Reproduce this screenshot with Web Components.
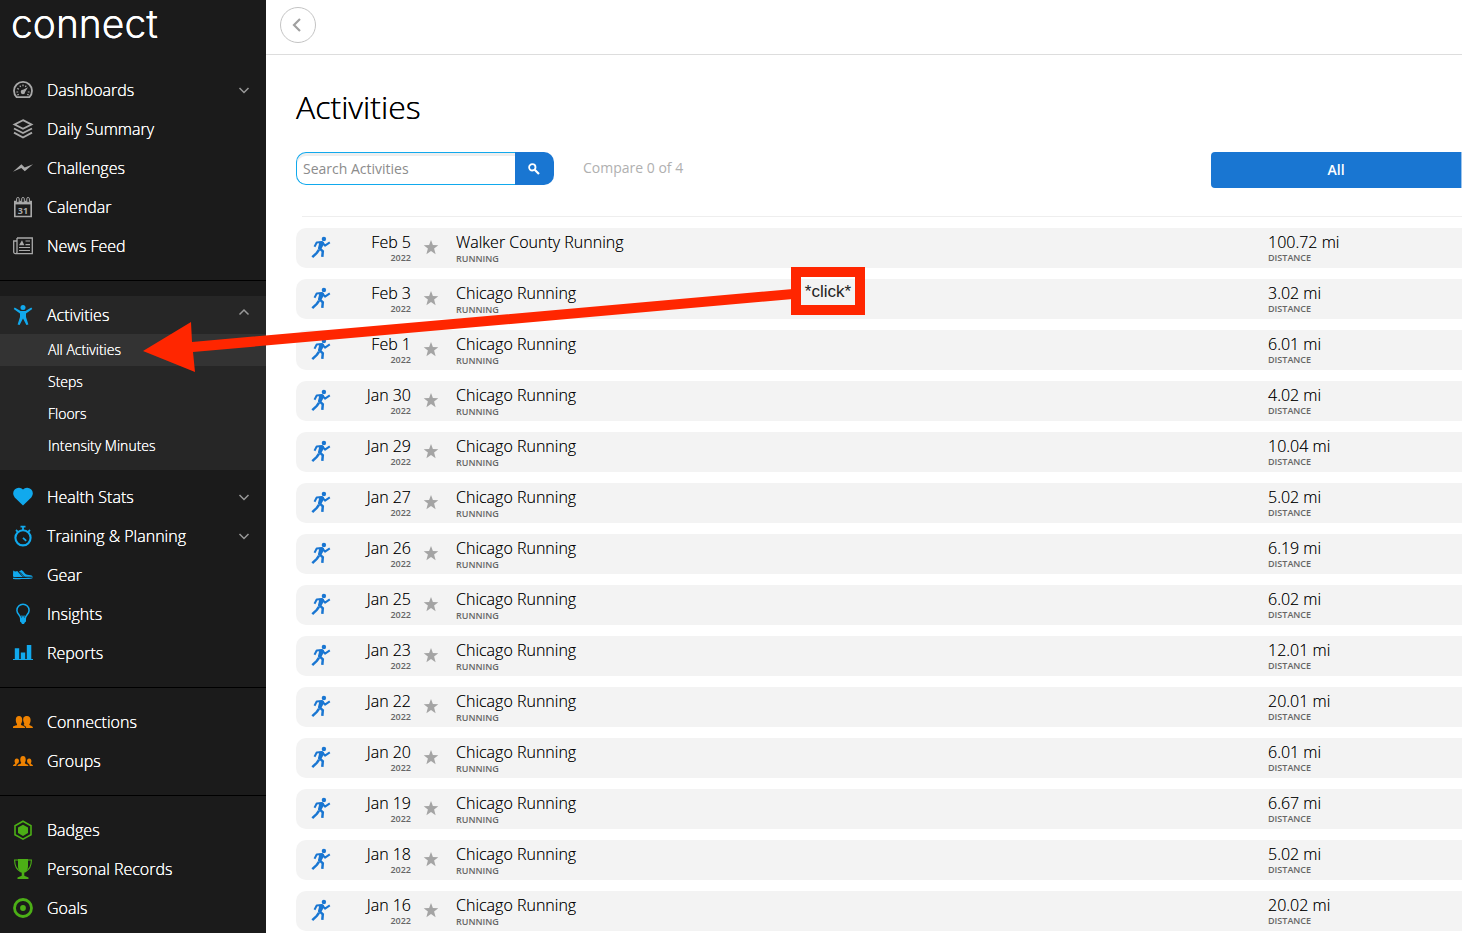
<!DOCTYPE html>
<html lang="en">
<head>
<meta charset="utf-8">
<title>Connect - Activities</title>
<style>
  body { margin: 0; font-family: "Open Sans", sans-serif; background: #fff; color: #000; }
</style>
</head>
<body>
<connect-app>
  <side-bar slot="side">
    <nav-item icon="gauge" tone="grey" chevron="down">Dashboards</nav-item>
    <nav-item icon="layers" tone="grey">Daily Summary</nav-item>
    <nav-item icon="bolt" tone="grey">Challenges</nav-item>
    <nav-item icon="calendar" tone="grey">Calendar</nav-item>
    <nav-item icon="news" tone="grey">News Feed</nav-item>
    <nav-divider></nav-divider>
    <nav-group>
      <nav-item icon="person" tone="blue" chevron="up">Activities</nav-item>
      <sub-item current>All Activities</sub-item>
      <sub-item>Steps</sub-item>
      <sub-item>Floors</sub-item>
      <sub-item>Intensity Minutes</sub-item>
    </nav-group>
    <nav-item icon="heart" tone="blue" chevron="down">Health Stats</nav-item>
    <nav-item icon="watch" tone="blue" chevron="down">Training &amp; Planning</nav-item>
    <nav-item icon="shoe" tone="blue">Gear</nav-item>
    <nav-item icon="bulb" tone="blue">Insights</nav-item>
    <nav-item icon="bars" tone="blue">Reports</nav-item>
    <nav-divider></nav-divider>
    <nav-item icon="pair" tone="orange">Connections</nav-item>
    <nav-item icon="group" tone="orange">Groups</nav-item>
    <nav-divider></nav-divider>
    <nav-item icon="badge" tone="green">Badges</nav-item>
    <nav-item icon="trophy" tone="green">Personal Records</nav-item>
    <nav-item icon="goal" tone="green">Goals</nav-item>
  </side-bar>
  <top-bar></top-bar>
  <activities-page>
    <search-box></search-box>
    <activity-table></activity-table>
  </activities-page>
  <click-hint slot="hint">*click*</click-hint>
</connect-app>

<script>
const define = (name, html, setup) => customElements.define(name, class extends HTMLElement {
  constructor() {
    super();
    const t = document.createElement('template');
    t.innerHTML = html;
    this.attachShadow({ mode: 'open' }).append(t.content.cloneNode(true));
  }
  connectedCallback() { if (setup) setup(this, this.shadowRoot); }
});

const svg = (body, box = '0 0 20 20') => `<svg viewBox="${box}" aria-hidden="true">${body}</svg>`;
const icons = {
  gauge: '<path d="M3.6 17.2A9 9 0 1 1 16.4 17.2Z" fill="none" stroke="currentColor" stroke-width="1.8" stroke-linejoin="round"/><path d="M3.4 12h1.8M14.800 12H16.600M4.300 8.400l1.600.8M6.800 5.600l.9 1.400M10 4.600v1.700M13.200 5.600l-.9 1.400M4.200 15l1.600-.6M14.200 14.400l1.600.6" stroke="currentColor" stroke-width="1.200"/><path d="M15 7.300 12.100 12a2.200 2.200 0 1 1-2-2.200Z" fill="currentColor"/>',
  layers: '<path d="M10 1.2 18.4 5.5 10 9.8 1.6 5.5ZM1 9.5l9 4.5 9-4.5M1 13.7l9 4.8 9-4.8" fill="none" stroke="currentColor" stroke-width="1.9"/>',
  bolt: '<path d="M0 13.7 8.4 6.3 11.7 9.4 20 6.2 11.8 13.2 8.3 10.1Z" fill="currentColor"/>',
  calendar: '<path d="M1.8 4.5h16.4v15H1.8Z" fill="none" stroke="currentColor" stroke-width="1.6"/><path d="M2 4h16v3.4H2Z" fill="currentColor"/><g fill="#1b1b1b" stroke="currentColor" stroke-width="1"><rect x="3.6" y=".5" width="2.6" height="5" rx="1.2"/><rect x="8.7" y=".5" width="2.6" height="5" rx="1.2"/><rect x="13.8" y=".5" width="2.6" height="5" rx="1.2"/></g><text x="10" y="17" text-anchor="middle" font-size="9" font-weight="700" fill="currentColor">31</text>',
  news: '<path d="M4 2h15.3v15.6H2.3A1.6 1.6 0 0 1 .7 16V5H4V16A1.5 1.5 0 0 1 2.3 17.6M4 2V16" fill="none" stroke="currentColor" stroke-width="1.3"/><path d="M6 9.2h5.3L10 6.4 9 4.2 7.8 6.3Z" fill="currentColor"/><path d="M12.5 5H17M12.5 8.6H17M6 11.5h11M6 14.5h11" stroke="currentColor" stroke-width="1.2"/>',
  person: '<circle cx="10" cy="2.400" r="2.500" fill="currentColor"/><path d="M.7 3.900 1.700 2.600 7.600 6h4.800L18.300 2.600 19.300 3.900 13 8.600 13 12 15.400 19.400 13.400 20 10 13.600 6.600 20 4.600 19.400 7 12V8.600Z" fill="currentColor"/>',
  heart: '<path d="M10 18.600 1.700 10.400A5.400 5.400 0 0 1 10 2.600 5.400 5.400 0 0 1 18.300 10.400Z" fill="currentColor"/>',
  watch: '<circle cx="10" cy="11.8" r="7.600" fill="none" stroke="currentColor" stroke-width="2.100"/><path d="M7.500.6h5M10 1v3M3 4l1.800 1.800M17 4l-1.800 1.800M10 11.800l3.200 3" stroke="currentColor" stroke-width="1.800"/>',
  shoe: '<path d="M.2 5.400C1.400 6.400 3 6.800 4.200 6L5 6.800 9.800 12H1.600C.5 12 0 11.500 0 10.400ZM6 6.600 8.600 5.100l1.800 1.400c1.400 2.500 3.200 3.500 5.600 3.500 1.900.1 3.600.4 3.700 1.800H9.800Z" fill="currentColor"/><path d="M0 12.700c6 .5 14 .5 20-.1-.2 1-1.700 1.500-5 1.400C9 13.700 6 14.600 0 13.900Z" fill="currentColor"/><path d="m5.400 6.700 4.900 5.300M7.200 6.900 11.600 12" stroke="#1b1b1b" stroke-width=".6"/>',
  bulb: '<path d="M7.7 14.4C7.7 11.4 3.9 9.9 3.9 6.4a6.1 6.1 0 0 1 12.2 0c0 3.500-3.800 5-3.800 8Z" fill="none" stroke="currentColor" stroke-width="1.500"/><path d="M7 14.400h6v3l-1.200 1.100-.8 1.500H9l-.8-1.500L7 17.400ZM9 14.400 8.200 11.500h1.300l.5 2 .5-2h1.300L11 14.400Z" fill="currentColor"/>',
  bars: '<path d="M0 16h1.800V5.300h4.400V16h1.600V9.600h4.400V16h1.600V2h4.500v14H20v1H0Z" fill="currentColor"/>',
  pair: '<path d="M0 16v-1.400c1.400-1.200 4.100-.8 4.100-2.400C2.600 10.400 1.600 4 6 4s3.500 6.200 1.900 8.200c0 1.600 4 1.200 4.400 3.800Z" fill="currentColor"/><path d="M14 4c4.400 0 4.300 6 2.300 8.400 0 1.700 3.700.7 3.700 3.600h-6.800c-.2-1.800-1.800-2.400-2.800-3C13 12.400 9 9.500 10.500 5.600 11 4.500 12.300 4 14 4Z" fill="currentColor"/>',
  group: '<path d="M4.500 15c.3-2 3.500-1.500 3.700-3.200C6.800 10 6.700 5 10 5s3.200 5 1.800 6.800C12 13.500 15.200 13 15.500 15ZM0 15c0-2 2-1.400 2.200-2.800C1 10.500 1.500 7.500 3.800 7.500S6.500 10 5.400 12C3.500 12.800 3.400 14 3.300 15ZM20 15c0-2-2-1.400-2.200-2.800 1.200-1.700.7-4.700-1.600-4.700S13.500 10 14.600 12c1.900.8 2 2 2.100 3Z" fill="currentColor"/>',
  badge: '<path d="m10 1.200 8 4.500v9l-8 4.500-8-4.500v-9Z" fill="none" stroke="currentColor" stroke-width="1.600"/><path d="m10 4.700 5 2.800v5.600l-5 2.800-5-2.800V7.500Z" fill="currentColor"/>',
  trophy: '<path d="M5 0h10v7.500c0 3.400-1.500 5.200-3.700 6.300v2.900L15.500 18.500V20h-11v-1.500l4.200-1.800v-2.900C6.500 12.700 5 10.900 5 7.500Z" fill="currentColor"/><path d="M5.500 1H1.600C1.600 6 3.200 10.600 8 13M14.500 1h3.900C18.400 6 16.800 10.600 12 13" fill="none" stroke="currentColor" stroke-width="1.100"/>',
  goal: '<circle cx="10" cy="10" r="8.500" fill="none" stroke="currentColor" stroke-width="2.800"/><circle cx="10" cy="10" r="2.900" fill="currentColor"/>'
};
const runner = svg('<circle cx="12.900" cy="2" r="2.200" fill="currentColor"/><path d="m11.400 5.600-2.900 5.700 3.300 3-.5 5.600M8 12.800 5.900 15.800 1.300 20.200" fill="none" stroke="currentColor" stroke-width="2.500"/><path d="M3.500 9.800 5.700 5.500 11 5 14 8.600 18.800 5.400" fill="none" stroke="currentColor" stroke-width="2" stroke-linejoin="round"/><path d="M8.400 4.800 12.900 5 12.300 8.500 9.900 12.800 7 11.400Z" fill="currentColor"/>', '0 0 20 22');
const star = svg('<path d="m7 0 1.900 5 5.400.2-4.200 3.400 1.500 5.600L7 11l-4.600 3.200L3.900 8.600-.3 5.200 5.100 5Z" fill="currentColor"/>', '0 0 14 14');

define('connect-app', `<style>
  :host { display: block; position: relative; overflow: hidden; }
  .frame { display: grid; grid-template-columns: 266px minmax(0, 1fr); min-height: 100vh; }
</style><div class="frame"><slot name="side"></slot><main><slot></slot></main></div><slot name="hint"></slot>`);

define('side-bar', `<style>
  :host { display: block; background: #1b1b1b; color: #fff; }
  .brand { display: block; height: 71px; padding-left: 11px; box-sizing: border-box; color: #fff;
    text-decoration: none; font: 300 39px/47px Inter, sans-serif; text-shadow: 0 0 0 currentColor; }
  nav { display: flex; flex-direction: column; gap: 1px; }
</style><a class="brand" href="#">connect</a><nav aria-label="Main"><slot></slot></nav>`);

define('nav-divider', `<style>
  :host { display: block; height: 1px; margin: 14px 0; background: #000; }
</style>`);

define('nav-group', `<style>
  :host { display: block; background: #262626; padding-bottom: 8px; margin-bottom: 7px; }
</style><slot></slot>`);

define('nav-item', `<style>
  :host { display: block; }
  a { display: flex; align-items: center; height: 38px; padding: 0 16px 0 13px; color: inherit;
    text-decoration: none; font-size: 16px; line-height: 24px; font-weight: 300; text-shadow: 0 0 0 currentColor; }
  .icon { width: 20px; height: 20px; margin-right: 14px; text-shadow: none; }
  .label { flex: 1; }
  svg { display: block; width: 100%; height: 100%; overflow: visible; }
  .chev { width: 12px; height: 12px; color: #999; }
  :host([tone=grey]) .icon { color: #a9a9a9; }
  :host([tone=blue]) .icon { color: #11a9ed; }
  :host([tone=orange]) .icon { color: #ef8200; }
  :host([tone=green]) .icon { color: #4caf16; }
</style><a href="#"><span class="icon"></span><span class="label"><slot></slot></span><span class="chev"></span></a>`,
(el, root) => {
  root.querySelector('.icon').innerHTML = svg(icons[el.getAttribute('icon')]);
  const dir = el.getAttribute('chevron');
  if (dir) root.querySelector('.chev').innerHTML = svg(
    `<path d="${dir === 'up' ? 'M1.500 5.500 6 1 10.500 5.500' : 'M1.500 4 6 8.500 10.500 4'}" fill="none" stroke="currentColor" stroke-width="1.500"/>`, '0 0 12 12');
});

define('sub-item', `<style>
  :host { display: block; }
  :host([current]) { background: #333; }
  a { display: block; padding-left: 48px; color: inherit; text-decoration: none; font-size: 14px; line-height: 32px;
    font-weight: 300; text-shadow: 0 0 0 currentColor; }
</style><a href="#"><slot></slot></a>`);

define('top-bar', `<style>
  :host { display: block; padding: 7px 14px 11px; border-bottom: 1px solid #ddd; }
  button { display: grid; place-items: center; width: 36px; height: 36px; padding: 0; border: 1px solid #c4c4c4;
    border-radius: 50%; background: #fff; color: #a0a0a0; }
  svg { display: block; width: 14px; height: 14px; }
</style><button aria-label="Back">${svg('<path d="M9 1 3 7l6 6" fill="none" stroke="currentColor" stroke-width="2.200"/>', '0 0 14 14')}</button>`);

define('activities-page', `<style>
  :host { display: block; padding-left: 30px; }
  h1 { margin: 0; padding: 30px 0 23px; font-size: 32px; line-height: 44px; font-weight: 300; text-shadow: 0 0 0 currentColor; }
</style><h1>Activities</h1><slot></slot>`);

define('search-box', `<style>
  :host { display: flex; align-items: flex-start; height: 64px; }
  form { display: flex; }
  input { width: 219px; height: 33px; box-sizing: border-box; margin: 0; padding: 0 6px; border: 1px solid #11a9ed;
    border-right: 0; border-radius: 10px 0 0 10px; box-shadow: inset 0 3px 0 #eee; background: #fff;
    font: 14px "Open Sans", sans-serif; outline: 0; }
  input::placeholder { color: #8c8c8c; opacity: 1; }
  form button { display: grid; place-items: center; width: 39px; height: 33px; padding: 0 2px 0 0; border: 0;
    border-radius: 0 10px 10px 0; background: #1976d2; color: #fff; }
  svg { display: block; width: 12px; height: 12px; }
  .compare { margin-left: 29px; font-size: 14px; line-height: 32px; color: #b0b0b0; flex: 1; }
  .filter { width: 251px; height: 36px; padding: 0 0 2px; border: 0; border-right: 1px solid #9cc4ec; border-radius: 4px 0 0 4px;
    background: #1976d2; color: #fff; font: 600 14px "Open Sans", sans-serif; }
</style><form role="search"><input type="text" placeholder="Search Activities" aria-label="Search Activities">
<button type="button" aria-label="Search">${svg('<circle cx="4.300" cy="4.300" r="3.200" fill="none" stroke="currentColor" stroke-width="1.800"/><path d="m6.700 6.700 4.300 4.300" stroke="currentColor" stroke-width="2.200"/>', '0 0 12 12')}</button></form>
<span class="compare">Compare 0 of 4</span><button class="filter">All</button>`);

define('activity-table', `<style>
  :host { display: block; }
  .rule { height: 1px; margin-left: 6px; background: #eee; }
  table { width: 100%; table-layout: fixed; border-collapse: separate; border-spacing: 0 11px; margin-bottom: -9px; }
  td { height: 40px; box-sizing: border-box; padding: 0; background: #f3f3f3; vertical-align: middle; }
  td:first-child { border-radius: 10px 0 0 10px; }
  .kind { width: 50px; } .date { width: 65px; } .fav { width: 45px; } .dist { width: 194px; }
  .run { width: 20px; height: 22px; margin-left: 15px; color: #1976d2; }
  td.fav { padding-bottom: 2px; }
  .fav button { display: block; width: 14px; height: 14px; margin-left: 13px; padding: 0; border: 0; background: none; color: #a4a4a4; }
  svg { display: block; width: 100%; height: 100%; overflow: visible; }
  b { display: block; font-size: 16px; line-height: 20px; font-weight: 300; color: #000; text-shadow: 0 0 0 #0008; }
  small { display: block; font-size: 9px; line-height: 12px; font-weight: 600; color: #666; }
  .name { padding-top: 2px; }
  .name small { line-height: 14px; }
  .date { text-align: right; }
  a { color: inherit; text-decoration: none; }
</style><div class="rule"></div><table aria-label="Activities">
<colgroup><col class="kind"><col class="date"><col class="fav"><col><col class="dist"></colgroup><tbody></tbody></table>`,
(el, root) => {
  const data = [['Feb 5', '100.72'], ['Feb 3', '3.02'], ['Feb 1', '6.01'], ['Jan 30', '4.02'], ['Jan 29', '10.04'],
    ['Jan 27', '5.02'], ['Jan 26', '6.19'], ['Jan 25', '6.02'], ['Jan 23', '12.01'], ['Jan 22', '20.01'],
    ['Jan 20', '6.01'], ['Jan 19', '6.67'], ['Jan 18', '5.02'], ['Jan 16', '20.02']];
  root.querySelector('tbody').innerHTML = data.map(([date, miles], i) => `<tr>
    <td><div class="run">${runner}</div></td>
    <td class="date"><b>${date}</b><small>2022</small></td>
    <td class="fav"><button aria-label="Favorite">${star}</button></td>
    <td class="name"><b><a href="#">${i ? 'Chicago' : 'Walker County'} Running</a></b><small>RUNNING</small></td>
    <td><b>${miles} mi</b><small>DISTANCE</small></td></tr>`).join('');
});

/* Tutorial annotation floating over the page: an arrow to the menu entry and its caption. */
define('click-hint', `<style>
  :host { position: absolute; left: 143px; top: 267px; width: 722px; height: 105px; pointer-events: none; }
  svg { display: block; width: 722px; height: 105px; }
  .tag { position: absolute; top: 0; right: 0; width: 74px; height: 48px; box-sizing: border-box;
    border: 10px solid #ff2600; color: #222; text-align: center; font: 17px/30px "Liberation Sans", sans-serif; white-space: nowrap; }
</style>${svg('<path d="M0 84 48 55 49 75 650 22V32L50 85 52 105Z" fill="#ff2600"/>', '0 0 722 105')}<div class="tag"><slot></slot></div>`);
</script>
</body>
</html>
